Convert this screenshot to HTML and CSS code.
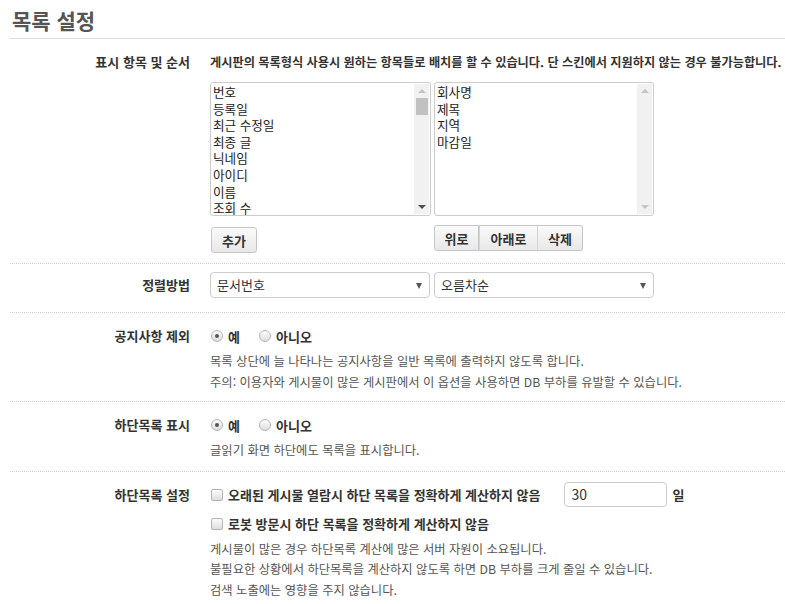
FILE: index.html
```html
<!DOCTYPE html>
<html lang="ko">
  <head>
    <meta charset="UTF-8" />
    <title>목록 설정</title>
    <link rel="stylesheet" href="styles.css">
  </head>
  <body>
    <div class="page">
      <h1 class="title">목록 설정</h1>

      <!-- 표시 항목 및 순서 -->
      <div class="row row-order">
        <div class="label">표시 항목 및 순서</div>
        <div class="field">
          <p class="lead">게시판의 목록형식 사용시 원하는 항목들로 배치를 할 수 있습니다. 단 스킨에서 지원하지 않는 경우 불가능합니다.</p>
          <div class="lists">
            <div class="list-col">
              <div class="listbox">
                <ul class="items">
                  <li>번호</li>
                  <li>등록일</li>
                  <li>최근 수정일</li>
                  <li>최종 글</li>
                  <li>닉네임</li>
                  <li>아이디</li>
                  <li>이름</li>
                  <li>조회 수</li>
                </ul>
                <div class="scroll">
                  <span class="arrow up"></span>
                  <span class="thumb"></span>
                  <span class="arrow down dark"></span>
                </div>
              </div>
              <button class="btn add">추가</button>
            </div>
            <div class="list-col">
              <div class="listbox">
                <ul class="items">
                  <li>회사명</li>
                  <li>제목</li>
                  <li>지역</li>
                  <li>마감일</li>
                </ul>
                <div class="scroll">
                  <span class="arrow up"></span>
                  <span class="arrow down"></span>
                </div>
              </div>
              <div class="btn-group">
                <button class="btn">위로</button><button class="btn">아래로</button><button class="btn">삭제</button>
              </div>
            </div>
          </div>
        </div>
      </div>

      <!-- 정렬방법 -->
      <div class="row row-sort">
        <div class="label">정렬방법</div>
        <div class="field selects">
          <div class="select">문서번호<span class="caret"></span></div>
          <div class="select">오름차순<span class="caret"></span></div>
        </div>
      </div>

      <!-- 공지사항 제외 -->
      <div class="row">
        <div class="label">공지사항 제외</div>
        <div class="field">
          <div class="options">
            <label class="opt"><span class="radio checked"></span>예</label>
            <label class="opt"><span class="radio"></span>아니오</label>
          </div>
          <p class="desc">목록 상단에 늘 나타나는 공지사항을 일반 목록에 출력하지 않도록 합니다.<br>주의: 이용자와 게시물이 많은 게시판에서 이 옵션을 사용하면 DB 부하를 유발할 수 있습니다.</p>
        </div>
      </div>

      <!-- 하단목록 표시 -->
      <div class="row row-list">
        <div class="label">하단목록 표시</div>
        <div class="field">
          <div class="options">
            <label class="opt"><span class="radio checked"></span>예</label>
            <label class="opt"><span class="radio"></span>아니오</label>
          </div>
          <p class="desc">글읽기 화면 하단에도 목록을 표시합니다.</p>
        </div>
      </div>

      <!-- 하단목록 설정 -->
      <div class="row last">
        <div class="label">하단목록 설정</div>
        <div class="field">
          <div class="options check-line">
            <label class="opt"><span class="check"></span>오래된 게시물 열람시 하단 목록을 정확하게 계산하지 않음</label>
            <span class="days"><span class="input">30</span>일</span>
          </div>
          <div class="options">
            <label class="opt"><span class="check"></span>로봇 방문시 하단 목록을 정확하게 계산하지 않음</label>
          </div>
          <p class="desc">게시물이 많은 경우 하단목록 계산에 많은 서버 자원이 소요됩니다.<br>불필요한 상황에서 하단목록을 계산하지 않도록 하면 DB 부하를 크게 줄일 수 있습니다.<br>검색 노출에는 영향을 주지 않습니다.</p>
        </div>
      </div>
    </div>
  </body>
</html>
```

FILE: styles.css
```css
html,
body {
  margin: 0;
  padding: 0;
  background: #fff;
  font-family: "Noto Sans CJK KR", "Noto Sans", sans-serif;
  font-size: 12px;
  color: #333;
}

.page {
  padding-left: 10px;
}

.title {
  margin: 0;
  padding: 6px 0 0 2px;
  height: 32px;
  line-height: 28px;
  font-size: 21px;
  font-weight: bold;
  color: #555;
  border-bottom: 1px solid #ddd;
}

.row {
  display: flex;
  padding: 13px 0 9px;
  border-bottom: 1px dotted #ccc;
}

.row.last {
  border-bottom: none;
}

.row-order {
  padding-bottom: 10px;
}

.row-list {
  padding-bottom: 10px;
}

.label {
  width: 180px;
  flex-shrink: 0;
  text-align: right;
  font-size: 13px;
  font-weight: bold;
  line-height: 20px;
  color: #333;
}

.field {
  margin-left: 20px;
}

.lead {
  margin: 0;
  font-size: 12.2px;
  line-height: 20px;
  font-weight: bold;
  color: #333;
}

.lists {
  display: flex;
  gap: 3px;
  margin-top: 10px;
}

/* 목록 선택 상자 */
.listbox {
  display: flex;
  height: 132px;
  border: 1px solid #ccc;
  border-radius: 3px;
  background: #fff;
}

.list-col:first-child .listbox {
  width: 219px;
}

.list-col:last-child .listbox {
  width: 218px;
}

.items {
  flex: 1;
  margin: 0;
  padding: 1px 2px;
  list-style: none;
  font-size: 12.6px;
  line-height: 16.6px;
  color: #222;
}

.scroll {
  width: 15px;
  margin: 1px 1px 1px 0;
  background: #f1f1f1;
  display: flex;
  flex-direction: column;
  align-items: center;
}

.arrow {
  width: 0;
  height: 0;
  border-left: 4px solid transparent;
  border-right: 4px solid transparent;
}

.arrow.up {
  margin-top: 5px;
  border-bottom: 4px solid #c4c4c4;
}

.arrow.down {
  margin-top: auto;
  margin-bottom: 5px;
  border-top: 4px solid #c4c4c4;
}

.arrow.down.dark {
  border-top-color: #505050;
}

.thumb {
  width: 12px;
  height: 17px;
  margin-top: 5px;
  background: #c1c1c1;
}

/* 버튼 */
.btn {
  font-family: inherit;
  font-size: 13px;
  font-weight: bold;
  color: #333;
  height: 26px;
  padding: 0 8px;
  border: 1px solid #c6c6c6;
  border-radius: 3px;
  background: linear-gradient(#fafafa, #e8e8e8);
  cursor: pointer;
}

.add {
  margin-top: 11px;
  margin-left: 1px;
  width: 46px;
}

.btn-group {
  display: flex;
  margin-top: 9px;
}

.btn-group .btn {
  border-radius: 0;
}

.btn-group .btn + .btn {
  border-left: none;
}

.btn-group .btn:first-child {
  width: 45px;
  border-radius: 3px 0 0 3px;
}

.btn-group .btn:nth-child(2) {
  width: 59px;
  border-left: 1px solid #d4d4d4;
  border-right: 1px solid #d4d4d4;
}

.btn-group .btn:last-child {
  width: 45px;
  border-radius: 0 3px 3px 0;
}

/* 정렬 */
.row-sort {
  padding: 8px 0 14px;
}

.row-sort .label {
  padding-top: 3px;
}

.selects {
  display: flex;
  gap: 4px;
}

.select {
  position: relative;
  width: 212px;
  height: 24px;
  padding-left: 6px;
  border: 1px solid #ccc;
  border-radius: 4px;
  font-size: 13px;
  line-height: 24px;
  color: #333;
}

.caret {
  position: absolute;
  right: 7px;
  top: 10px;
  width: 0;
  height: 0;
  border-left: 3.5px solid transparent;
  border-right: 3.5px solid transparent;
  border-top: 6px solid #555;
}

/* 라디오, 체크박스 */
.options {
  display: flex;
  align-items: center;
  height: 20px;
}

.opt {
  display: flex;
  align-items: center;
  font-size: 13px;
  font-weight: bold;
  color: #333;
  margin-right: 18px;
}

.radio {
  position: relative;
  width: 12px;
  height: 12px;
  margin: 0 5px 0 1px;
  border: 1px solid #b4b4b4;
  border-radius: 50%;
  background: linear-gradient(#fdfdfd, #dedede);
  box-sizing: border-box;
}

.radio.checked::after {
  content: "";
  position: absolute;
  left: 3px;
  top: 3px;
  width: 4px;
  height: 4px;
  border-radius: 50%;
  background: #555;
}

.check {
  width: 12px;
  height: 12px;
  margin: 0 5px 0 1px;
  border: 1px solid #b4b4b4;
  border-radius: 2px;
  background: linear-gradient(#fdfdfd, #dedede);
  box-sizing: border-box;
}

.check-line + .options {
  margin-top: 9px;
}

.days {
  display: flex;
  align-items: center;
  font-size: 13px;
  font-weight: bold;
  margin-left: 5px;
}

.input {
  width: 94px;
  height: 23px;
  padding-left: 7px;
  margin-right: 6px;
  border: 1px solid #ccc;
  border-radius: 4px;
  font-size: 14px;
  font-weight: normal;
  line-height: 23px;
  color: #333;
}

.desc {
  margin: 5px 0 0;
  font-size: 12.3px;
  line-height: 20.5px;
  color: #555;
}
```
